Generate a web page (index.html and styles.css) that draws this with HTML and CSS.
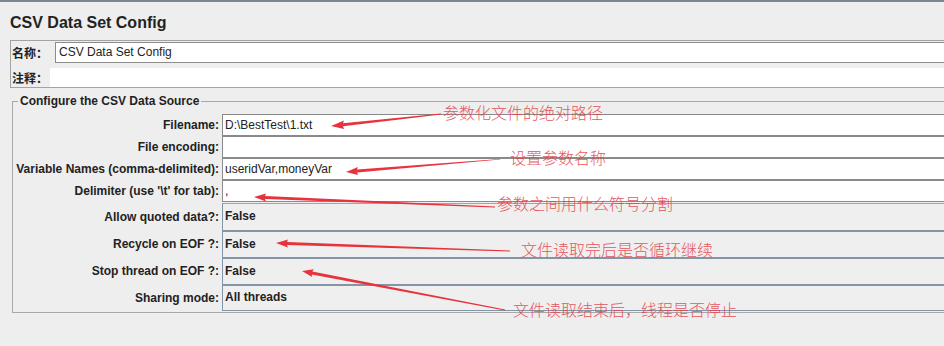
FILE: index.html
```html
<!DOCTYPE html>
<html lang="en">
<head>
  <meta charset="UTF-8">
  <title>CSV Data Set Config</title>
  <link rel="stylesheet" href="styles.css">
</head>
<body>

  <div class="topbar"></div>

  <div class="page">
    <h1 class="title">CSV Data Set Config</h1>

    <!-- Name / comment panel -->
    <div class="name-panel">
      <div class="name-row">
        <label class="name-label">名称：</label>
        <div class="name-input">CSV Data Set Config</div>
      </div>
      <div class="comment-row">
        <label class="comment-label">注释：</label>
        <div class="comment-input"></div>
      </div>
    </div>

    <!-- CSV source settings -->
    <fieldset class="source">
      <legend>Configure the CSV Data Source</legend>
      <div class="grid">
        <label class="field-label">Filename:</label>
        <div class="text-field">D:\BestTest\1.txt</div>

        <label class="field-label">File encoding:</label>
        <div class="text-field"></div>

        <label class="field-label">Variable Names (comma-delimited):</label>
        <div class="text-field">useridVar,moneyVar</div>

        <label class="field-label">Delimiter (use '\t' for tab):</label>
        <div class="text-field">,</div>

        <label class="field-label combo-first">Allow quoted data?:</label>
        <div class="combo combo-first">False</div>

        <label class="field-label">Recycle on EOF ?:</label>
        <div class="combo">False</div>

        <label class="field-label">Stop thread on EOF ?:</label>
        <div class="combo">False</div>

        <label class="field-label">Sharing mode:</label>
        <div class="combo combo-last">All threads</div>
      </div>
    </fieldset>
  </div>

  <!-- Red annotations drawn over the screenshot -->
  <div class="notes">
    <svg class="arrows" width="944" height="346" viewBox="0 0 944 346">
      <polygon points="331,126 344,120.5 343,123.2 441,113.6 441,114.4 343,126.2 344,129" />
      <polygon points="346,172 358,166.9 357,169.4 500,158.9 500,159.5 357,172.4 358,174.9" />
      <polygon points="254,197 266,193.5 265,196 495,206.6 495,207.4 265,199 266,201.5" />
      <polygon points="276,243 288,239.4 287,241.9 510,250.6 510,251.4 287,244.9 288,247.4" />
      <polygon points="302,271 313.8,269.2 312.3,271.4 505.1,309.6 504.9,310.4 311.7,274.4 312.2,277" />
    </svg>
    <span class="note note-1">参数化文件的绝对路径</span>
    <span class="note note-2">设置参数名称</span>
    <span class="note note-3">参数之间用什么符号分割</span>
    <span class="note note-4">文件读取完后是否循环继续</span>
    <span class="note note-5">文件读取结束后，线程是否停止</span>
  </div>

</body>
</html>
```

FILE: styles.css
```css
body {
  margin: 0;
  background: #eeeeee;
  font-family: "Liberation Sans", Arial, "Noto Sans CJK SC", sans-serif;
  font-size: 12px;
  color: #222;
  overflow: hidden;
  width: 944px;
  height: 346px;
  position: relative;
}
.topbar {
  height: 2px;
  background: #7d8595;
}
.page {
  width: 934px;
  padding-left: 10px;
}
.title {
  margin: 11px 0 0;
  font-size: 16px;
  line-height: 20px;
  font-weight: bold;
  color: #222;
}

/* name / comment */
.name-panel {
  margin-top: 7px;
  border: 1px solid #a3a3a3;
  border-right: none;
  padding: 1px 0 0 1px;
}
.name-row, .comment-row {
  display: flex;
  align-items: center;
}
.name-row { height: 21px; }
.comment-row { height: 24px; align-items: flex-end; }
.name-label, .comment-label {
  font-family: "Noto Sans CJK SC", sans-serif;
  font-weight: bold;
  font-size: 12px;
  width: 36px;
  line-height: 19px;
}
.name-label { margin-right: 7px; }
.comment-label { margin-right: 2px; }
.name-input {
  flex: 1;
  height: 21px;
  box-sizing: border-box;
  border: 1px solid #8c8c8c;
  border-right: none;
  background: #fff;
  padding-left: 3px;
  line-height: 19px;
}
.comment-input {
  flex: 1;
  height: 19px;
  background: #fff;
}

/* csv source */
.source {
  margin: 6px 0 0 2px;
  padding: 0 0 1px;
  border: 1px solid #a8a8a8;
  border-right: none;
  min-width: 0;
}
.source legend {
  margin-left: 5px;
  padding: 0 2px;
  font-weight: bold;
  line-height: 14px;
}
.grid {
  margin-top: 6px;
  display: grid;
  grid-template-columns: 206px 1fr;
  column-gap: 3px;
}
.field-label {
  font-weight: bold;
  text-align: right;
  display: flex;
  align-items: center;
  justify-content: flex-end;
}
.text-field {
  height: 22px;
  box-sizing: border-box;
  border: 1px solid #8a8a8a;
  border-right: none;
  background: #fff;
  padding-left: 2px;
  line-height: 20px;
}
.combo {
  height: 27px;
  box-sizing: border-box;
  border-top: 2px solid #8395a9;
  border-left: 1px solid #8395a9;
  background: #efefef;
  padding-left: 2px;
  line-height: 24px;
  font-weight: bold;
}
.combo-first { margin-top: 1px; }
.combo.combo-first { border-top: 1px solid #9aa6b3; }
.combo-last {
  border-bottom: 1px solid #8395a9;
  line-height: 23px;
}

/* annotations */
.notes {
  position: absolute;
  left: 0;
  top: 0;
  width: 944px;
  height: 346px;
  pointer-events: none;
}
.arrows {
  position: absolute;
  left: 0;
  top: 0;
}
.arrows polygon {
  fill: #e8323c;
}
.note {
  position: absolute;
  font-family: "Noto Sans CJK SC", sans-serif;
  font-weight: 300;
  font-size: 16px;
  line-height: 18px;
  color: #e43c46;
  white-space: nowrap;
  opacity: 0.85;
}
.note-1 { left: 443px; top: 103px; }
.note-2 { left: 510px; top: 148px; }
.note-3 { left: 497px; top: 194px; }
.note-4 { left: 521px; top: 240px; }
.note-5 { left: 513px; top: 300px; }
```
